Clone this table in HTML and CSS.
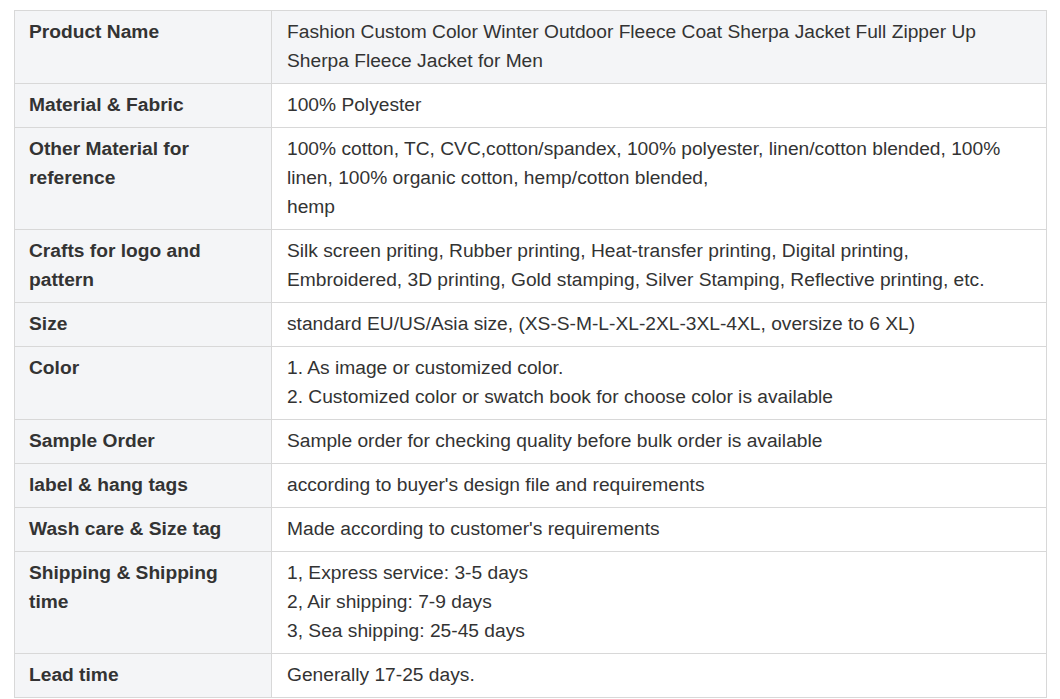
FILE: index.html
```html
<!DOCTYPE html>
<html>
<head>
<meta charset="utf-8">
<link rel="stylesheet" href="styles.css">
</head>
<body>
<table class="spec">
  <colgroup><col class="c-key"><col class="c-val"></colgroup>
  <tbody>
    <tr class="first"><th>Product Name</th><td>Fashion Custom Color Winter Outdoor Fleece Coat Sherpa Jacket Full Zipper Up Sherpa Fleece Jacket for Men</td></tr>
    <tr><th>Material &amp; Fabric</th><td>100% Polyester</td></tr>
    <tr><th>Other Material for reference</th><td>100% cotton, TC, CVC,cotton/spandex, 100% polyester, linen/cotton blended, 100% linen, 100% organic cotton, hemp/cotton blended,<br>hemp</td></tr>
    <tr><th>Crafts for logo and pattern</th><td>Silk screen priting, Rubber printing, Heat-transfer printing, Digital printing, Embroidered, 3D printing, Gold stamping, Silver Stamping, Reflective printing, etc.</td></tr>
    <tr><th>Size</th><td>standard EU/US/Asia size, (XS-S-M-L-XL-2XL-3XL-4XL, oversize to 6 XL)</td></tr>
    <tr><th>Color</th><td>1. As image or customized color.<br>2. Customized color or swatch book for choose color is available</td></tr>
    <tr><th>Sample Order</th><td>Sample order for checking quality before bulk order is available</td></tr>
    <tr><th>label &amp; hang tags</th><td>according to buyer's design file and requirements</td></tr>
    <tr><th>Wash care &amp; Size tag</th><td>Made according to customer's requirements</td></tr>
    <tr><th>Shipping &amp; Shipping time</th><td>1, Express service: 3-5 days<br>2, Air shipping: 7-9 days<br>3, Sea shipping: 25-45 days</td></tr>
    <tr><th>Lead time</th><td>Generally 17-25 days.</td></tr>
  </tbody>
</table>
</body>
</html>
```

FILE: styles.css
```css
html, body {
  margin: 0;
  padding: 0;
  background: #ffffff;
  overflow: hidden;
}
body {
  padding: 10px 14px 0 14px;
  font-family: "Liberation Sans", Arial, sans-serif;
  font-size: 19.2px;
  line-height: 29px;
  color: #333333;
}
.spec {
  width: 1033px;
  border-collapse: collapse;
  table-layout: fixed;
}
.c-key { width: 257px; }
.spec th,
.spec td {
  border: 1px solid #d8d8d8;
  padding: 6px 14px 8px 14px;
  vertical-align: top;
  text-align: left;
}
.spec th {
  font-weight: bold;
  background: #f4f5f7;
  padding-right: 40px;
}
.spec td {
  background: #ffffff;
  padding-left: 15px;
  padding-right: 24px;
}
.spec tr.first td {
  background: #f4f5f7;
}
```
